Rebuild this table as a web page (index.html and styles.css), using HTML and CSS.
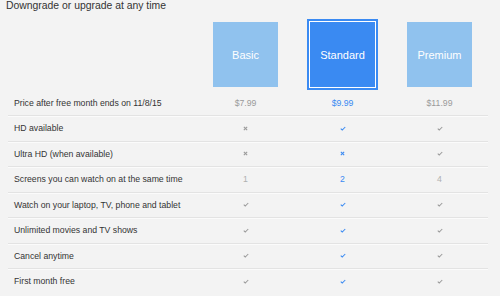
FILE: index.html
```html
<!DOCTYPE html>
<html>
<head>
<meta charset="utf-8">
<link rel="stylesheet" href="styles.css">
</head>
<body>
<div class="page">
  <div class="heading">Downgrade or upgrade at any time</div>
  <div class="plans">
    <div class="spacer"></div>
    <div class="plan-cell"><div class="plan">Basic</div></div>
    <div class="plan-cell"><div class="plan selected">Standard</div></div>
    <div class="plan-cell"><div class="plan">Premium</div></div>
  </div>
  <div class="row price">
    <div class="label">Price after free month ends on 11/8/15</div>
    <div class="val">$7.99</div>
    <div class="val on">$9.99</div>
    <div class="val">$11.99</div>
  </div>
  <div class="row">
    <div class="label">HD available</div>
    <div class="val"><svg class="x" viewBox="0 0 6 6"><path d="M1 1L5 5M5 1L1 5"/></svg></div>
    <div class="val on"><svg class="chk" viewBox="0 0 8 6"><path d="M1 3.2L3 5L7 1"/></svg></div>
    <div class="val"><svg class="chk" viewBox="0 0 8 6"><path d="M1 3.2L3 5L7 1"/></svg></div>
  </div>
  <div class="row">
    <div class="label">Ultra HD (when available)</div>
    <div class="val"><svg class="x" viewBox="0 0 6 6"><path d="M1 1L5 5M5 1L1 5"/></svg></div>
    <div class="val on"><svg class="x" viewBox="0 0 6 6"><path d="M1 1L5 5M5 1L1 5"/></svg></div>
    <div class="val"><svg class="chk" viewBox="0 0 8 6"><path d="M1 3.2L3 5L7 1"/></svg></div>
  </div>
  <div class="row">
    <div class="label">Screens you can watch on at the same time</div>
    <div class="val num">1</div>
    <div class="val on num">2</div>
    <div class="val num">4</div>
  </div>
  <div class="row">
    <div class="label">Watch on your laptop, TV, phone and tablet</div>
    <div class="val"><svg class="chk" viewBox="0 0 8 6"><path d="M1 3.2L3 5L7 1"/></svg></div>
    <div class="val on"><svg class="chk" viewBox="0 0 8 6"><path d="M1 3.2L3 5L7 1"/></svg></div>
    <div class="val"><svg class="chk" viewBox="0 0 8 6"><path d="M1 3.2L3 5L7 1"/></svg></div>
  </div>
  <div class="row">
    <div class="label">Unlimited movies and TV shows</div>
    <div class="val"><svg class="chk" viewBox="0 0 8 6"><path d="M1 3.2L3 5L7 1"/></svg></div>
    <div class="val on"><svg class="chk" viewBox="0 0 8 6"><path d="M1 3.2L3 5L7 1"/></svg></div>
    <div class="val"><svg class="chk" viewBox="0 0 8 6"><path d="M1 3.2L3 5L7 1"/></svg></div>
  </div>
  <div class="row">
    <div class="label">Cancel anytime</div>
    <div class="val"><svg class="chk" viewBox="0 0 8 6"><path d="M1 3.2L3 5L7 1"/></svg></div>
    <div class="val on"><svg class="chk" viewBox="0 0 8 6"><path d="M1 3.2L3 5L7 1"/></svg></div>
    <div class="val"><svg class="chk" viewBox="0 0 8 6"><path d="M1 3.2L3 5L7 1"/></svg></div>
  </div>
  <div class="row last">
    <div class="label">First month free</div>
    <div class="val"><svg class="chk" viewBox="0 0 8 6"><path d="M1 3.2L3 5L7 1"/></svg></div>
    <div class="val on"><svg class="chk" viewBox="0 0 8 6"><path d="M1 3.2L3 5L7 1"/></svg></div>
    <div class="val"><svg class="chk" viewBox="0 0 8 6"><path d="M1 3.2L3 5L7 1"/></svg></div>
  </div>
</div>
</body>
</html>
```

FILE: styles.css
```css
html, body {
  margin: 0;
  padding: 0;
  background: #f3f3f3;
}
body {
  font-family: "Liberation Sans", Arial, sans-serif;
  color: #333;
  width: 500px;
  height: 296px;
  overflow: hidden;
}
.page {
  display: flex;
  flex-direction: column;
}
.heading {
  height: 19px;
  line-height: 12px;
  font-size: 10.4px;
  padding-left: 6px;
  color: #333;
}
.plans {
  display: grid;
  grid-template-columns: 189px 97px 97px 97px;
  margin-left: 8px;
  height: 71px;
  align-items: center;
}
.plan-cell {
  display: flex;
  justify-content: center;
  align-items: center;
  height: 71px;
}
.plan {
  width: 65px;
  height: 65px;
  background: #90c2ee;
  color: #fff;
  font-size: 11px;
  display: flex;
  align-items: center;
  justify-content: center;
  box-sizing: border-box;
}
.plan.selected {
  width: 71px;
  height: 71px;
  background: #3a8af2;
  border: 2px solid #3a8af2;
  box-shadow: inset 0 0 0 1px #fff;
}
.row {
  display: grid;
  grid-template-columns: 189px 97px 97px 97px;
  margin-left: 8px;
  width: 480px;
  height: 24.5px;
  align-items: center;
  border-bottom: 1px solid #e3e3e3;
  box-shadow: 0 1px 0 #fbfbfb;
}
.row.price {
  height: 25px;
}
.row.last {
  border-bottom: none;
  box-shadow: none;
}
.label {
  font-size: 8.7px;
  padding-left: 6px;
  color: #333;
  white-space: nowrap;
}
.val {
  text-align: center;
  font-size: 8.7px;
  color: #9a9a9a;
  display: flex;
  justify-content: center;
  align-items: center;
}
.val.on {
  color: #3a8af2;
}
.num {
  color: #b0b0b0;
}
svg {
  display: block;
  fill: none;
  stroke: currentColor;
}
.chk {
  width: 6px;
  height: 5px;
  stroke-width: 1.4;
}
.x {
  width: 5px;
  height: 5px;
  stroke-width: 1.3;
}
```
